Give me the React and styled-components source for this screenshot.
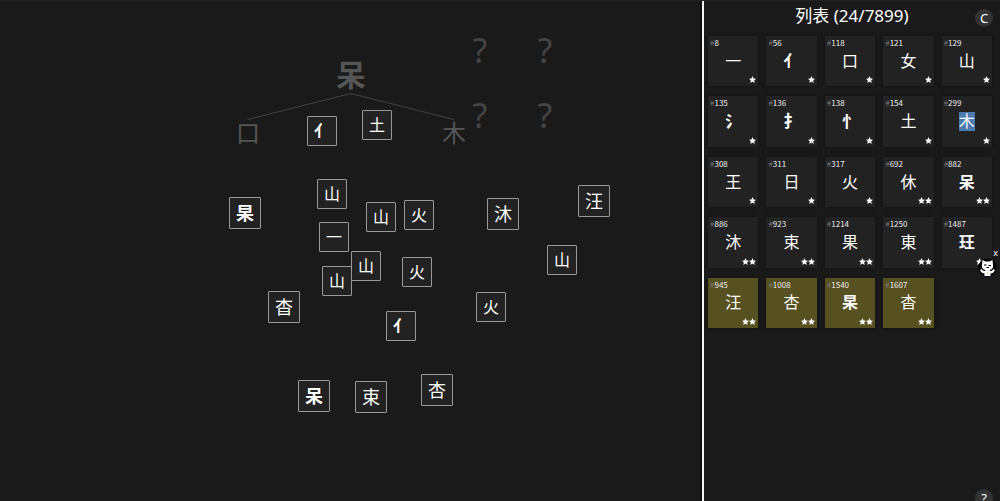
import React from "react";
import styled, { createGlobalStyle, css } from "styled-components";

const GlobalStyle = createGlobalStyle`
  *, *::before, *::after { box-sizing: border-box; }
  body {
    margin: 0;
    background: #1a1a1a;
    color: #fff;
    font-family: "Noto Sans", "Noto Sans CJK SC", sans-serif;
    overflow: hidden;
  }
  button { font-family: inherit; color: inherit; padding: 0; margin: 0; cursor: pointer; }
`;

const Page = styled.div`
  display: grid;
  grid-template-columns: 7fr 3fr;
  min-height: 100vh;
  border-top: 1px solid #222;
`;

const Canvas = styled.main`
  position: relative;
  overflow: hidden;
`;

const Tree = styled.svg`
  position: absolute;
  left: 246px;
  top: 91px;
  width: 210px;
  height: 29px;
`;

const Hint = styled.span`
  position: absolute;
  left: ${(p) => p.$x}px;
  top: ${(p) => p.$y}px;
  transform: translate(-50%, -50%);
  font-size: ${(p) => p.$size}px;
  font-weight: ${(p) => (p.$bold ? 700 : 400)};
  line-height: 1;
  color: ${(p) => p.$color};
`;

const Tile = styled.button`
  position: absolute;
  left: ${(p) => p.$x}px;
  top: ${(p) => p.$y}px;
  width: ${(p) => (p.$large ? 32 : 30)}px;
  height: ${(p) => (p.$large ? 32 : 30)}px;
  display: flex;
  align-items: center;
  justify-content: center;
  background: #222;
  border: 1px solid #999;
  border-radius: 1px;
  font-size: ${(p) => (p.$large ? 18 : 16)}px;
  font-weight: ${(p) => (p.$bold ? 700 : 400)};
  line-height: 1;
`;

const Sidebar = styled.aside`
  position: relative;
  display: flex;
`;

const Divider = styled.div`
  flex: none;
  width: 4px;
  border-left: 2px solid #0e0e0e;
  background: #f4f4f4;
`;

const Panel = styled.section`
  flex: 1;
  min-width: 0;
`;

const Title = styled.h1`
  margin: 0;
  height: 35px;
  padding-top: 4px;
  font-size: 17px;
  line-height: 22px;
  font-weight: 400;
  text-align: center;
`;

const Grid = styled.div`
  display: grid;
  grid-template-columns: repeat(5, 1fr);
  gap: 10px 8px;
  padding: 0 8px 8px 4px;
`;

const Card = styled.button`
  aspect-ratio: 1;
  display: grid;
  grid-template-rows: 12px 1fr 12px;
  border: 0;
  background: ${(p) => (p.$fresh ? "#575021" : "#222")};
  box-shadow: 0 0 3px #111;
`;

const Index = styled.span`
  padding-left: 2px;
  font-family: "Noto Sans CJK SC", sans-serif;
  font-size: 8px;
  line-height: 14px;
  text-align: left;
  color: #eee;
`;

const Hash = styled.span`
  color: #777;
`;

const Glyph = styled.span`
  align-self: center;
  justify-self: center;
  font-size: 16px;
  line-height: 19px;
  font-weight: ${(p) => (p.$bold ? 700 : 400)};
  ${(p) =>
    p.$selected &&
    css`
      background: #4c7bb0;
    `}
`;

const Stars = styled.span`
  display: flex;
  justify-content: flex-end;
  padding: 2px 2px 0 0;
`;

const StarIcon = styled.svg`
  width: 7px;
  height: 7px;
  fill: #fff;
`;

const RoundButton = styled.button`
  position: absolute;
  right: 7px;
  ${(p) => (p.$bottom ? "bottom: -6px;" : "top: 8px;")}
  width: 18px;
  height: 18px;
  display: flex;
  align-items: center;
  justify-content: center;
  border: 0;
  border-radius: 50%;
  background: #333;
  font-size: 13px;
  line-height: 1;
`;

const Badge = styled.div`
  position: absolute;
  right: 3px;
  top: 257px;
`;

const CatLink = styled.a`
  display: block;
`;

const CatIcon = styled.svg`
  display: block;
  width: 19px;
  height: 19px;
`;

const CloseButton = styled.button`
  position: absolute;
  right: -1px;
  top: -10px;
  border: 0;
  background: none;
  font-size: 9px;
  line-height: 10px;
`;

const tiles = [
  { c: "亻", x: 307, y: 115, bold: true },
  { c: "土", x: 362, y: 109 },
  { c: "山", x: 317, y: 178 },
  { c: "山", x: 366, y: 201 },
  { c: "火", x: 404, y: 199 },
  { c: "一", x: 319, y: 221 },
  { c: "山", x: 322, y: 265 },
  { c: "山", x: 351, y: 250 },
  { c: "火", x: 402, y: 256 },
  { c: "亻", x: 386, y: 310, bold: true },
  { c: "山", x: 547, y: 244 },
  { c: "火", x: 476, y: 291 },
  { c: "杲", x: 229, y: 196, large: true, bold: true },
  { c: "杳", x: 268, y: 290, large: true },
  { c: "沐", x: 487, y: 197, large: true },
  { c: "汪", x: 578, y: 184, large: true },
  { c: "呆", x: 298, y: 379, large: true, bold: true },
  { c: "束", x: 355, y: 380, large: true },
  { c: "杏", x: 421, y: 373, large: true },
];

const cards = [
  { n: 8, c: "一" },
  { n: 56, c: "亻", bold: true },
  { n: 118, c: "口" },
  { n: 121, c: "女" },
  { n: 129, c: "山" },
  { n: 135, c: "氵", bold: true },
  { n: 136, c: "扌", bold: true },
  { n: 138, c: "忄", bold: true },
  { n: 154, c: "土" },
  { n: 299, c: "木", selected: true },
  { n: 308, c: "王" },
  { n: 311, c: "日" },
  { n: 317, c: "火" },
  { n: 692, c: "休", stars: 2 },
  { n: 882, c: "呆", stars: 2, bold: true },
  { n: 886, c: "沐", stars: 2 },
  { n: 923, c: "束", stars: 2 },
  { n: 1214, c: "果", stars: 2 },
  { n: 1250, c: "東", stars: 2 },
  { n: 1487, c: "玨", stars: 2, bold: true },
  { n: 945, c: "汪", stars: 2, fresh: true },
  { n: 1008, c: "杏", stars: 2, fresh: true },
  { n: 1540, c: "杲", stars: 2, fresh: true, bold: true },
  { n: 1607, c: "杳", stars: 2, fresh: true },
];

const unknowns = [
  [480, 49],
  [545, 49],
  [480, 114],
  [545, 114],
];

function Star() {
  return (
    <StarIcon viewBox="0 0 20 20" aria-hidden="true">
      <path d="M10 0l3 7 7 .6-5.300 4.900L16.300 20 10 16l-6.300 4 1.600-7.500L0 7.600 7 7z" />
    </StarIcon>
  );
}

function Cat() {
  return (
    <CatIcon viewBox="0 0 38 38" aria-hidden="true">
      <circle cx="19" cy="19" r="18.500" fill="#000" />
      <path
        fill="#fff"
        d="M9 4l6 3h8l6-3 1 9c1 7-2 10-7 11l1 2c3 0 5-1 7-4l3 2c-2 5-5 7-9 7v5H13v-5c-4 0-7-2-9-7l3-2c2 3 4 4 7 4l1-2c-5-1-8-4-7-11z"
      />
      <path d="M12 14h5M21 15h5M17 19h5" stroke="#000" strokeWidth="2" />
      <path d="M18 27h3v6h-3z" fill="#e8e2b5" />
    </CatIcon>
  );
}

export default function App() {
  return (
    <>
      <GlobalStyle />
      <Page>
        <Canvas>
          <Tree viewBox="0 0 210 29" aria-hidden="true">
            <path d="M1.500 27.500L105 1.500l103 26" fill="none" stroke="#444" />
          </Tree>
          <Hint $x={351} $y={74} $size={30} $color="#555" $bold>呆</Hint>
          <Hint $x={248} $y={132} $size={24} $color="#555">口</Hint>
          <Hint $x={454} $y={132} $size={24} $color="#555">木</Hint>
          {unknowns.map(([x, y]) => (
            <Hint key={`${x}-${y}`} $x={x} $y={y} $size={34} $color="#444">?</Hint>
          ))}
          {tiles.map((t, i) => (
            <Tile key={i} $x={t.x} $y={t.y} $large={t.large} $bold={t.bold}>
              {t.c}
            </Tile>
          ))}
        </Canvas>
        <Sidebar>
          <Divider />
          <Panel>
            <Title>列表 (24/7899)</Title>
            <Grid>
              {cards.map((k) => (
                <Card key={k.n} $fresh={k.fresh}>
                  <Index>
                    <Hash>#</Hash>
                    {k.n}
                  </Index>
                  <Glyph $bold={k.bold} $selected={k.selected}>{k.c}</Glyph>
                  <Stars>
                    {Array.from({ length: k.stars || 1 }, (_, i) => (
                      <Star key={i} />
                    ))}
                  </Stars>
                </Card>
              ))}
            </Grid>
          </Panel>
          <RoundButton aria-label="Clear">C</RoundButton>
          <RoundButton aria-label="Help" $bottom>?</RoundButton>
          <Badge>
            <CatLink href="#source" aria-label="Source code"><Cat /></CatLink>
            <CloseButton aria-label="Close">x</CloseButton>
          </Badge>
        </Sidebar>
      </Page>
    </>
  );
}
